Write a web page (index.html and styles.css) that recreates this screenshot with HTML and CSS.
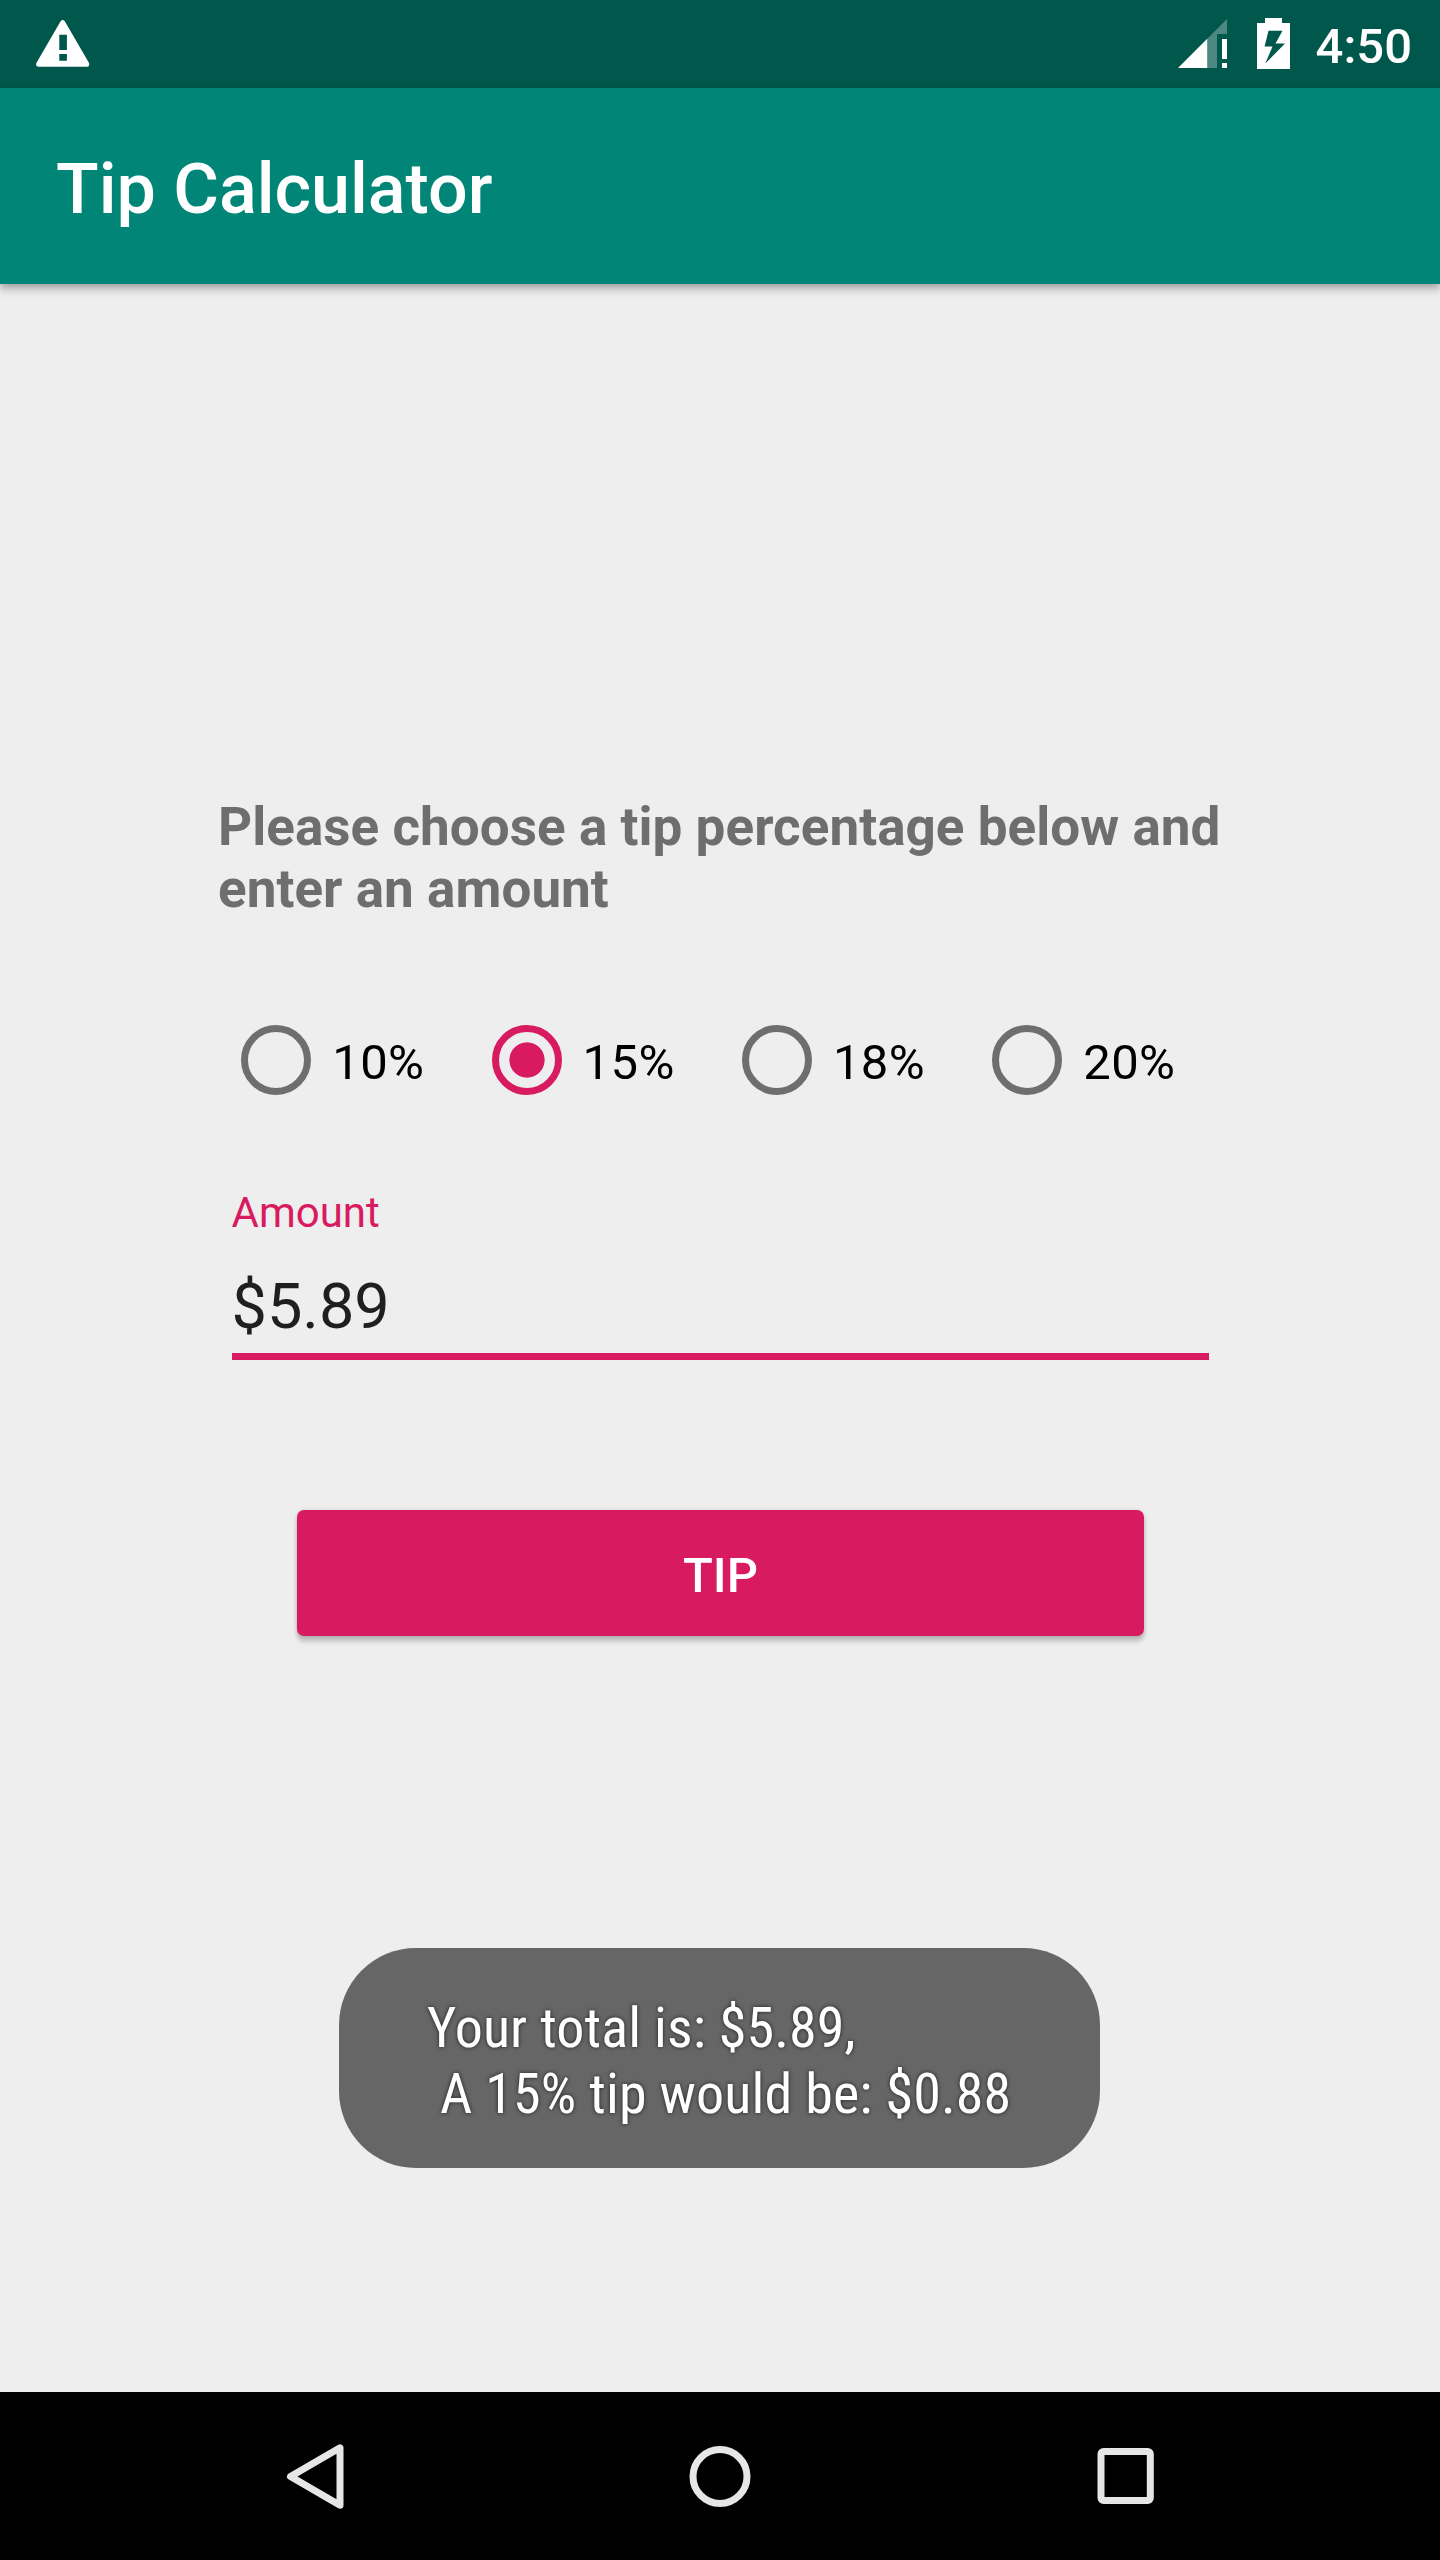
FILE: index.html
```html
<!DOCTYPE html>
<html lang="en">
<head>
<meta charset="utf-8">
<title>Tip Calculator</title>
<link rel="stylesheet" href="styles.css">
</head>
<body>
<div class="status-bar">
  <svg class="icon-warning" width="54" height="48" viewBox="0 0 54 48"><path fill="#fff" fill-rule="evenodd" d="M24.6 1.2Q26.7-1.3 28.8 1.2L53 43Q54 46.8 50.500 46.800H3Q-.8 46.800 .4 43ZM23.300 14.700V30H30.900V14.700ZM23.300 34V40.700H30.900V34Z"/></svg>
  <div class="status-right">
    <svg class="icon-signal" width="50" height="50" viewBox="0 0 50 50"><path fill="#fff" fill-opacity=".3" d="M49 0V15H39V49H29V20Z"/><path fill="#fff" d="M0 49 29.200 19.800V49ZM44 20H49V40H44ZM44 44H49V49H44Z"/></svg>
    <svg class="icon-battery" width="33" height="51" viewBox="0 0 33 51"><path fill="#fff" fill-rule="evenodd" d="M8 0H25V5H33V51H0V5H8ZM11.500 12.800 7.600 28.500H15.500L8.300 45.500 28 25.500H18.500L25.500 12.800Z"/></svg>
    <span class="clock">4:50</span>
  </div>
</div>
<header class="app-bar"><h1 class="app-title">Tip Calculator</h1></header>
<main class="content">
  <h2 class="prompt">Please choose a tip percentage below and enter an amount</h2>
  <div class="options">
    <label class="option"><span class="radio"></span><span class="option-text">10%</span></label>
    <label class="option"><span class="radio radio-checked"></span><span class="option-text">15%</span></label>
    <label class="option"><span class="radio"></span><span class="option-text">18%</span></label>
    <label class="option"><span class="radio"></span><span class="option-text">20%</span></label>
  </div>
  <div class="field">
    <div class="field-label">Amount</div>
    <div class="field-value">$5.89</div>
  </div>
  <button class="tip-button">TIP</button>
  <div class="toast"><div class="toast-text">Your total is: $5.89,
 A 15% tip would be: $0.88</div></div>
</main>
<nav class="nav-bar">
  <svg class="nav-icon" width="70" height="70" viewBox="0 0 70 70"><path fill="none" stroke="#e6e6e6" stroke-width="7" stroke-linejoin="round" d="M61 6.800V64.200L11.500 35.500Z"/></svg>
  <svg class="nav-icon" width="70" height="70" viewBox="0 0 70 70"><circle cx="35" cy="35.500" r="27" fill="none" stroke="#e6e6e6" stroke-width="7"/></svg>
  <svg class="nav-icon" width="70" height="70" viewBox="0 0 70 70"><rect x="10" y="10.500" width="49.300" height="49" rx="2.500" fill="none" stroke="#e6e6e6" stroke-width="7"/></svg>
</nav>
</body>
</html>
```
FILE: styles.css
```css
* { box-sizing: border-box; }
body {
  margin: 0;
  width: 1440px;
  height: 2560px;
  display: flex;
  flex-direction: column;
  overflow: hidden;
  background: #eeeeee;
  font-family: Roboto, sans-serif;
}
svg { display: block; }
.status-bar {
  height: 88px;
  flex: none;
  display: flex;
  justify-content: space-between;
  align-items: flex-start;
  padding: 0 28px 0 36px;
  background: #00574b;
}
.icon-warning { margin-top: 20px; }
.status-right { display: flex; align-items: flex-start; }
.icon-signal { margin-top: 19px; }
.icon-battery { margin: 18px 26px 0 29px; }
.clock {
  margin-top: 18px;
  font-size: 49px;
  font-weight: 500;
  line-height: 58px;
  color: #fff;
}
.app-bar {
  position: relative;
  height: 196px;
  flex: none;
  display: flex;
  align-items: center;
  padding: 6px 56px 0;
  background: #008577;
  box-shadow: 0 6px 8px rgba(0, 0, 0, 0.22), 0 2px 5px rgba(0, 0, 0, 0.12);
}
.app-title {
  margin: 0;
  font-size: 70px;
  font-weight: 500;
  line-height: 82px;
  color: #fff;
}
.content {
  height: 2108px;
  flex: none;
  display: flex;
  flex-direction: column;
  align-items: center;
  padding-top: 512px;
}
.prompt {
  margin: 0;
  width: 1004px;
  font-size: 53px;
  font-weight: 700;
  line-height: 62px;
  letter-spacing: 0.04px;
  color: #6e6e6e;
}
.options {
  display: flex;
  width: 1002px;
  height: 84px;
  margin-top: 98px;
  padding-left: 22.2px;
}
.option {
  width: 250.35px;
  flex: none;
  display: flex;
  align-items: center;
  gap: 21px;
  font-size: 49px;
  line-height: 58px;
  letter-spacing: 0.4px;
  color: #000;
}
.option-text { padding-top: 5px; }
.radio {
  width: 70px;
  height: 70px;
  flex: none;
  border: 7px solid #6e6e6e;
  border-radius: 50%;
}
.radio-checked {
  border-color: #d81b60;
  background: radial-gradient(circle, #d81b60 17.2px, transparent 18px);
}
.field {
  width: 977px;
  margin-top: 86px;
  border-bottom: 7px solid #d81b60;
}
.field-label {
  font-size: 42px;
  line-height: 50px;
  color: #d81b60;
}
.field-value {
  margin-top: 31px;
  padding-bottom: 9px;
  font-size: 63px;
  line-height: 75px;
  color: #1f1f1f;
}
.tip-button {
  width: 847px;
  height: 126px;
  margin-top: 150px;
  padding: 6px 0 0 1px;
  border: 0;
  border-radius: 7px;
  background: #d81b60;
  box-shadow: 0 6px 4px rgba(0, 0, 0, 0.17), 0 1px 4px rgba(0, 0, 0, 0.17);
  font: 500 49px/58px Roboto, sans-serif;
  color: #fff;
}
.toast {
  width: 761px;
  height: 220px;
  margin: 312px 1px 0 0;
  padding: 47px 0 0 88px;
  border-radius: 77px;
  background: #666666;
}
.toast-text {
  font-family: "Roboto Condensed", Roboto, sans-serif;
  font-stretch: 75%;
  font-size: 56px;
  line-height: 66px;
  letter-spacing: 0.1px;
  white-space: pre;
  color: #fff;
  text-shadow: 0 0 4px rgba(0, 0, 0, 0.7);
}
.nav-bar {
  height: 168px;
  flex: none;
  display: flex;
  justify-content: center;
  align-items: center;
  gap: 336px;
  background: #000;
}
```
